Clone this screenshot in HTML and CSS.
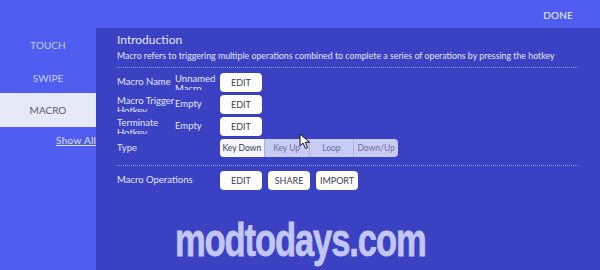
FILE: index.html
```html
<!DOCTYPE html>
<html>
<head>
<meta charset="utf-8">
<link rel="stylesheet" href="styles.css">
</head>
<body>
<div class="app">
  <header class="topbar">
    <span class="done">DONE</span>
  </header>
  <div class="main">
    <nav class="sidebar">
      <div class="nav-item">TOUCH</div>
      <div class="nav-item">SWIPE</div>
      <div class="nav-item active">MACRO</div>
      <div class="show-all"><span>Show All Views</span></div>
    </nav>
    <section class="panel">
      <h2 class="title">Introduction</h2>
      <p class="desc">Macro refers to triggering multiple operations combined to complete a series of operations by pressing the hotkey</p>
      <div class="sep"></div>
      <div class="row">
        <div class="label"><div class="clip">Macro Name</div></div>
        <div class="value"><div class="clip">Unnamed Macro</div></div>
        <button class="btn">EDIT</button>
      </div>
      <div class="row">
        <div class="label"><div class="clip">Macro Trigger Hotkey</div></div>
        <div class="value"><div class="clip">Empty</div></div>
        <button class="btn">EDIT</button>
      </div>
      <div class="row">
        <div class="label"><div class="clip">Terminate Hotkey</div></div>
        <div class="value"><div class="clip">Empty</div></div>
        <button class="btn">EDIT</button>
      </div>
      <div class="row">
        <div class="label"><div class="clip">Type</div></div>
        <div class="value"></div>
        <div class="seg">
          <span class="seg-item on">Key Down</span>
          <span class="seg-item">Key Up</span>
          <span class="seg-item">Loop</span>
          <span class="seg-item">Down/Up</span>
        </div>
      </div>
      <div class="sep sep2"></div>
      <div class="row ops">
        <div class="label wide"><div class="clip">Macro Operations</div></div>
        <div class="btns">
          <button class="btn">EDIT</button>
          <button class="btn">SHARE</button>
          <button class="btn">IMPORT</button>
        </div>
      </div>
    </section>
  </div>
  <div class="watermark">modtodays.com</div>
  <svg class="cursor" width="14" height="17" viewBox="0 0 14 17">
    <path d="M1 1 L1 13 L4 10 L6.5 15.5 L8.6 14.6 L6.2 9.3 L10.5 9.3 Z" fill="#ffffff" stroke="#111111" stroke-width="1" stroke-linejoin="round"/>
  </svg>
</div>
</body>
</html>
```
FILE: styles.css
```css
* { box-sizing: border-box; }
html, body { margin: 0; padding: 0; }
body {
  width: 600px;
  height: 270px;
  overflow: hidden;
  font-family: "Lato", "DejaVu Sans", sans-serif;
  background: #4f5ef0;
}
.app {
  position: relative;
  width: 600px;
  height: 270px;
  display: flex;
  flex-direction: column;
}
.topbar {
  height: 28px;
  display: flex;
  justify-content: flex-end;
  align-items: center;
  padding-right: 27px;
  padding-top: 1px;
}
.done {
  color: #eef0ff;
  font-size: 10px;
  letter-spacing: 0.2px;
}
.main {
  flex: 1;
  display: flex;
}
.sidebar {
  width: 96px;
  flex: none;
  display: flex;
  flex-direction: column;
  overflow: hidden;
}
.nav-item {
  height: 33px;
  display: flex;
  align-items: center;
  justify-content: center;
  color: #c9cdf4;
  font-size: 10px;
}
.nav-item.active {
  background: #e6e9f8;
  color: #5a5c70;
  height: 34px;
  margin-top: -1px;
}
.show-all {
  overflow: hidden;
  white-space: nowrap;
  padding-top: 1px;
  padding-left: 56px;
}
.show-all span {
  color: #dde0ff;
  font-size: 10px;
  letter-spacing: 0.3px;
  text-decoration: underline;
}
.panel {
  flex: 1;
  background: #3a41c3;
  padding: 4px 22px 0 21px;
  color: #e4e6ff;
}
.title {
  margin: 0;
  font-size: 12px;
  font-weight: normal;
  line-height: 15px;
}
.desc {
  margin: 3px 0 0;
  font-size: 8.8px;
  line-height: 12px;
  white-space: nowrap;
}
.sep {
  margin-top: 5px;
  border-top: 1px dotted #9aa0f0;
  height: 0;
}
.row {
  height: 22px;
  display: flex;
  align-items: center;
}
.sep + .row { margin-top: 3px; }
.label {
  width: 58px;
  height: 22px;
  display: flex;
  align-items: center;
  font-size: 9.5px;
  line-height: 10px;
  overflow: hidden;
}
.label.wide { width: 103px; }
.value {
  width: 45px;
  height: 22px;
  display: flex;
  align-items: center;
  font-size: 9.5px;
  line-height: 10px;
  overflow: hidden;
}
.clip {
  max-height: 16px;
  overflow: hidden;
}
.btn {
  width: 42px;
  height: 19px;
  border: none;
  border-radius: 4px;
  background: #ffffff;
  color: #3a3c50;
  font-family: "Lato", "DejaVu Sans", sans-serif;
  font-size: 9px;
  padding: 0;
  box-shadow: 0 0 1px rgba(0,0,0,0.3);
}
.btns {
  display: flex;
  gap: 6px;
}
.seg {
  display: flex;
  width: 178px;
  height: 18px;
  border-radius: 4px;
  overflow: hidden;
  background: #c8cbf2;
}
.seg-item {
  flex: 1;
  display: flex;
  align-items: center;
  justify-content: center;
  font-size: 8.5px;
  color: #6b6fa8;
  border-left: 1px solid #a9addf;
}
.seg-item:first-child { border-left: none; }
.seg-item.on {
  background: #f4f5ff;
  color: #3a3c50;
}
.sep2 { margin-top: 6px; }
.sep2 + .row { margin-top: 3px; }
.watermark {
  position: absolute;
  left: 175px;
  top: 213px;
  font-family: "Liberation Sans", "DejaVu Sans", sans-serif;
  font-weight: bold;
  font-size: 47px;
  line-height: 54px;
  color: #c3c5f2;
  letter-spacing: -1.5px;
  transform: scaleX(0.735);
  transform-origin: left center;
  white-space: nowrap;
  -webkit-text-stroke: 0.8px #c3c5f2;
}
.cursor {
  position: absolute;
  left: 299px;
  top: 133px;
}
```
